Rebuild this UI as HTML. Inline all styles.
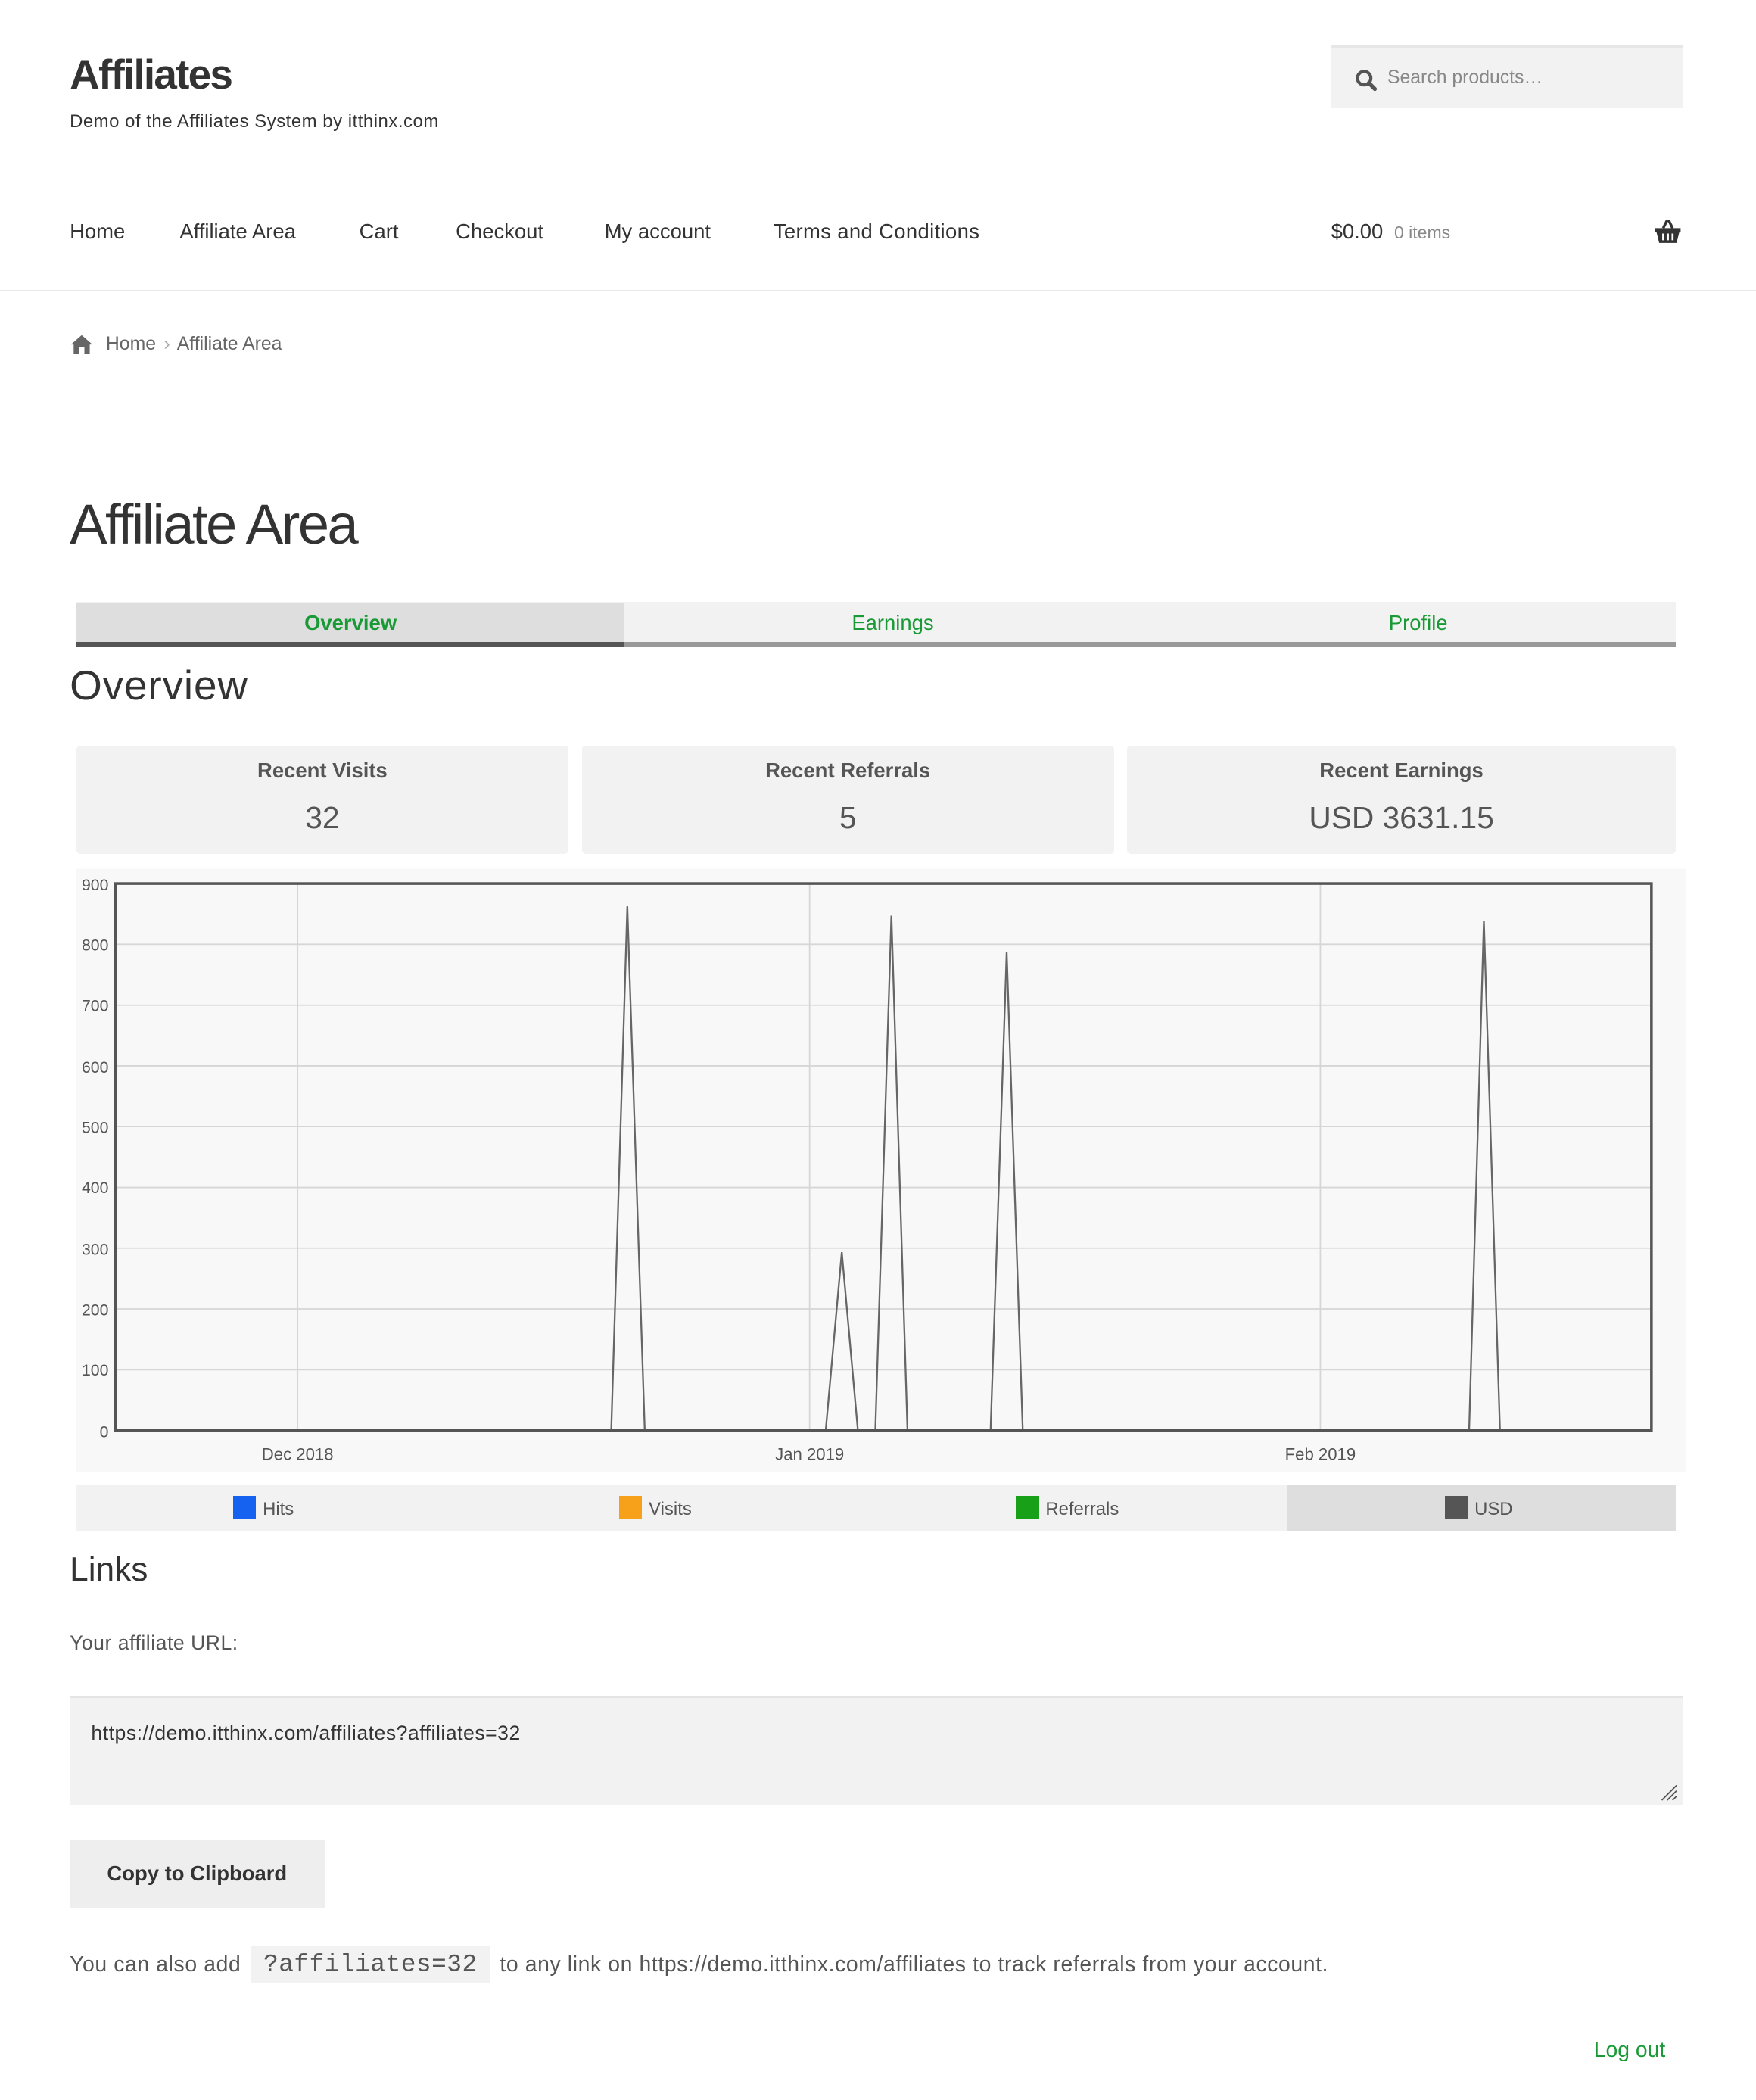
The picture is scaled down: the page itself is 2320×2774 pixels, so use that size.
<!DOCTYPE html>
<html><head><meta charset="utf-8"><style>
html,body{margin:0;padding:0;background:#fff}
body{width:1310px;height:1566px;zoom:1.77099;overflow:hidden;position:relative;font-family:"Liberation Sans",sans-serif;color:#333}
.a{position:absolute;white-space:nowrap}
.nav{font-size:15.5px;color:#333;top:164px}
.box{position:absolute;background:#f2f2f2;border-radius:3px;text-align:center;top:556px;height:81px}
.box .t{font-weight:bold;font-size:15.5px;color:#555;margin-top:10px}
.box .v{font-size:23px;color:#555;margin-top:13px}
.tab{position:absolute;top:450px;height:29px;line-height:29px;text-align:center;font-size:15.5px;color:#1a9a36}
.leg{position:absolute;top:1108px;height:34px;line-height:36px;font-size:13.5px;color:#555}
.sw{display:inline-block;width:17px;height:17px;vertical-align:-3px;margin-right:5px}
</style></head><body>
<div class="a" style="left:52px;top:37px;font-size:31px;font-weight:bold;color:#333;letter-spacing:-1px">Affiliates</div>
<div class="a" style="left:52px;top:83px;font-size:13.5px;color:#333;letter-spacing:0.3px">Demo of the Affiliates System by itthinx.com</div>
<div class="a" style="left:993px;top:34px;width:262px;height:47px;background:#f2f2f2;border-top:2px solid #e6e6e6;box-sizing:border-box"></div>
<svg class="a" style="left:1010px;top:51px" width="18" height="18" viewBox="0 0 18 18"><circle cx="7.5" cy="7.5" r="5" fill="none" stroke="#555" stroke-width="2.4"/><line x1="11" y1="11" x2="15.5" y2="15.5" stroke="#555" stroke-width="3" stroke-linecap="round"/></svg>
<div class="a" style="left:1035px;top:50px;font-size:14px;color:#888">Search products…</div>
<div class="a nav" style="left:52px">Home</div>
<div class="a nav" style="left:134px">Affiliate Area</div>
<div class="a nav" style="left:268px">Cart</div>
<div class="a nav" style="left:340px">Checkout</div>
<div class="a nav" style="left:451px">My account</div>
<div class="a nav" style="left:577px;letter-spacing:0.2px">Terms and Conditions</div>
<div class="a nav" style="left:993px">$0.00 <span style="font-size:13px;color:#888;margin-left:4px">0 items</span></div>
<svg class="a" style="left:1234px;top:163px" width="21" height="19" viewBox="0 0 21 19"><path d="M7 7 L10 1 M14 7 L11 1" stroke="#333" stroke-width="2" fill="none"/><path d="M1 7 H20 V10 H19 L17 18 H4 L2 10 H1Z" fill="#333"/><path d="M7 11 V16 M10.5 11 V16 M14 11 V16" stroke="#fff" stroke-width="1.5"/></svg>
<div class="a" style="left:0;top:216px;width:1310px;height:1px;background:#e8e8e8"></div>
<svg class="a" style="left:52px;top:249px" width="18" height="15" viewBox="0 0 18 15"><path d="M9 1 L1 8 L3 8 L3 15 L7 15 L7 10 L11 10 L11 15 L15 15 L15 8 L17 8Z" fill="#666"/></svg>
<div class="a" style="left:79px;top:249px;font-size:14px;color:#666">Home <span style="color:#aaa;margin:0 2px">›</span> Affiliate Area</div>
<div class="a" style="left:52px;top:367px;font-size:42px;font-weight:300;color:#333;letter-spacing:-1.5px">Affiliate Area</div>
<div class="a" style="left:57px;top:449px;width:1193px;height:34px;background:#f2f2f2"></div>
<div class="tab" style="left:57px;width:409px;background:#dedede;font-weight:bold">Overview</div>
<div class="tab" style="left:466px;width:400px">Earnings</div>
<div class="tab" style="left:866px;width:384px">Profile</div>
<div class="a" style="left:57px;top:479px;width:1193px;height:4px;background:#999"></div>
<div class="a" style="left:57px;top:479px;width:409px;height:4px;background:#555"></div>
<div class="a" style="left:52px;top:493px;font-size:31px;font-weight:300;color:#333;letter-spacing:0.5px">Overview</div>
<div class="box" style="left:57px;width:367px"><div class="t">Recent Visits</div><div class="v">32</div></div>
<div class="box" style="left:434px;width:397px"><div class="t">Recent Referrals</div><div class="v">5</div></div>
<div class="box" style="left:841px;width:409px"><div class="t">Recent Earnings</div><div class="v">USD 3631.15</div></div>
<svg class="a" style="left:0;top:0" width="1310" height="1110" viewBox="0 0 1310 1110">
<rect x="57" y="648" width="1201" height="450" fill="#f8f8f8"/>
<g stroke="#d6d6d6" stroke-width="1">
<line x1="86" x2="1232" y1="704.3" y2="704.3"/><line x1="86" x2="1232" y1="749.7" y2="749.7"/><line x1="86" x2="1232" y1="795" y2="795"/><line x1="86" x2="1232" y1="840.3" y2="840.3"/><line x1="86" x2="1232" y1="885.7" y2="885.7"/><line x1="86" x2="1232" y1="931" y2="931"/><line x1="86" x2="1232" y1="976.3" y2="976.3"/><line x1="86" x2="1232" y1="1021.7" y2="1021.7"/>
<line x1="222" x2="222" y1="659" y2="1067"/><line x1="604" x2="604" y1="659" y2="1067"/><line x1="985" x2="985" y1="659" y2="1067"/>
</g>
<polyline fill="none" stroke="#666" stroke-width="1.3" points="86,1067 456,1067 468,676 481,1067 616,1067 628,934 640,1067 653,1067 665,683 677,1067 739,1067 751,710 763,1067 1096,1067 1107,687 1119,1067 1232,1067"/>
<rect x="86" y="659" width="1146" height="408" fill="none" stroke="#555" stroke-width="2"/>
<g font-family="Liberation Sans,sans-serif" font-size="12" fill="#555" text-anchor="end">
<text x="81" y="664">900</text><text x="81" y="709">800</text><text x="81" y="754">700</text><text x="81" y="800">600</text><text x="81" y="845">500</text><text x="81" y="890">400</text><text x="81" y="936">300</text><text x="81" y="981">200</text><text x="81" y="1026">100</text><text x="81" y="1072">0</text>
</g>
<g font-family="Liberation Sans,sans-serif" font-size="12.5" fill="#555" text-anchor="middle">
<text x="222" y="1089">Dec 2018</text><text x="604" y="1089">Jan 2019</text><text x="985" y="1089">Feb 2019</text>
</g>
</svg>
<div class="a" style="left:57px;top:1108px;width:1193px;height:34px;background:#f2f2f2"></div>
<div class="a" style="left:960px;top:1108px;width:290px;height:34px;background:#dedede"></div>
<div class="leg" style="left:174px"><span class="sw" style="background:#1662f0"></span>Hits</div>
<div class="leg" style="left:462px"><span class="sw" style="background:#f7a11a"></span>Visits</div>
<div class="leg" style="left:758px"><span class="sw" style="background:#18a018"></span>Referrals</div>
<div class="leg" style="left:1078px"><span class="sw" style="background:#555"></span>USD</div>
<div class="a" style="left:52px;top:1157px;font-size:25px;font-weight:300;color:#333">Links</div>
<div class="a" style="left:52px;top:1217px;font-size:15px;color:#555;letter-spacing:0.3px">Your affiliate URL:</div>
<div class="a" style="left:52px;top:1265px;width:1203px;height:81px;background:#f2f2f2;border-top:2px solid #e4e4e4;box-sizing:border-box"></div>
<div class="a" style="left:68px;top:1284px;font-size:15px;color:#333;letter-spacing:0.3px">https://demo.itthinx.com/affiliates?affiliates=32</div>
<svg class="a" style="left:1238px;top:1330px" width="14" height="14"><path d="M2 13 L13 2 M6 13 L13 6 M10 13 L13 10" stroke="#555"/></svg>
<div class="a" style="left:52px;top:1372px;width:190px;height:51px;background:#eee;line-height:51px;text-align:center;font-weight:bold;font-size:15.5px;color:#333">Copy to Clipboard</div>
<div class="a" style="left:52px;top:1455px;font-size:16px;color:#555;letter-spacing:0.35px">You can also add <span style="font-family:'Liberation Mono',monospace;background:#f2f2f2;padding:3px 9px;font-size:18.5px;letter-spacing:0.3px;margin:0 3px">?affiliates=32</span> to any link on https://demo.itthinx.com/affiliates to track referrals from your account.</div>
<div class="a" style="left:1189px;top:1520px;font-size:16px;color:#1a9a36">Log out</div>
</body></html>
